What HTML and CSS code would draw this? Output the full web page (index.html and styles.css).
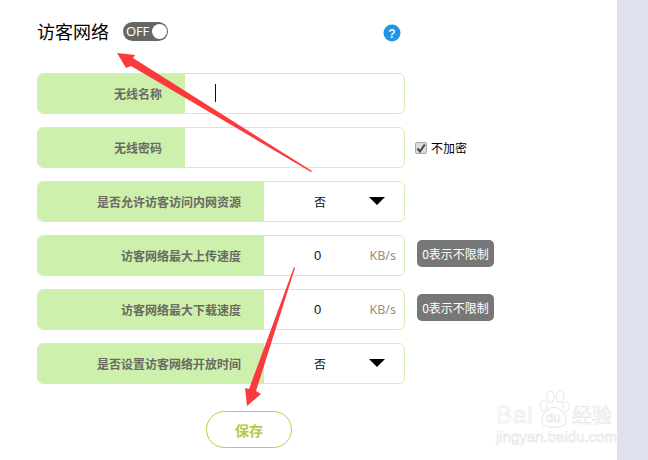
FILE: index.html
```html
<!DOCTYPE html>
<html lang="zh">
<head>
<meta charset="utf-8">
<title>访客网络</title>
<link rel="stylesheet" href="styles.css">
</head>
<body>
<div class="page">
  <main class="main">
    <header class="head">
      <h1 class="title">访客网络</h1>
      <div class="toggle"><span class="toggle-text">OFF</span><span class="knob"></span></div>
      <svg class="help" width="18" height="18" viewBox="0 0 18 18"><circle cx="9" cy="9" r="8.5" fill="#2294e6"/><text x="9" y="13.5" text-anchor="middle" class="help-mark">?</text></svg>
    </header>
    <div class="rows">
      <div class="row">
        <div class="field"><div class="label">无线名称</div><div class="value value-input"><span class="caret"></span></div></div>
      </div>
      <div class="row">
        <div class="field"><div class="label">无线密码</div><div class="value"></div></div>
        <div class="check"><span class="check-box"><svg width="10" height="10" viewBox="0 0 10 10"><path d="M1.5 5.5 4 8.5 8.8 1.5" fill="none" stroke="#444" stroke-width="2"/></svg></span><span>不加密</span></div>
      </div>
      <div class="row">
        <div class="field"><div class="label label-wide">是否允许访客访问内网资源</div><div class="value value-select"><span class="sel">否</span><span class="tri"></span></div></div>
      </div>
      <div class="row">
        <div class="field"><div class="label label-wide">访客网络最大上传速度</div><div class="value value-num"><span class="num">0</span><span class="unit">KB/s</span></div></div>
        <div class="badge">0表示不限制</div>
      </div>
      <div class="row">
        <div class="field"><div class="label label-wide">访客网络最大下载速度</div><div class="value value-num"><span class="num">0</span><span class="unit">KB/s</span></div></div>
        <div class="badge">0表示不限制</div>
      </div>
      <div class="row">
        <div class="field"><div class="label label-wide">是否设置访客网络开放时间</div><div class="value value-select"><span class="sel">否</span><span class="tri"></span></div></div>
      </div>
    </div>
    <button class="save" type="button">保存</button>
  </main>
  <aside class="side"></aside>
</div>
<svg class="arrows" width="648" height="460" viewBox="0 0 648 460">
  <polygon fill="#fb3b3b" points="117,53 135,55 133,58 312,171 311,172 131,66 126,68"/>
  <polygon fill="#fb3b3b" points="247,406 245,388 249,389 294,267 295,268 256,391 261,394"/>
</svg>
<div class="mark">
  <div class="mark-top"><span class="mark-bai">Bai</span><svg class="paw" width="34" height="38" viewBox="0 0 36 44"><g fill="none" stroke="#e8e8e8" stroke-width="1.2"><ellipse cx="6" cy="18" rx="4" ry="6"/><ellipse cx="14" cy="8" rx="4.5" ry="6.5"/><ellipse cx="25" cy="8" rx="4.5" ry="6.5"/><ellipse cx="32" cy="19" rx="3.5" ry="6"/><path d="M18 20c-6 0-14 8-14 15 0 7 6 8 14 8s14-1 14-8c0-7-8-15-14-15z"/></g></svg><span class="mark-du">du</span><span class="mark-cn">经验</span></div>
  <div class="mark-url">jingyan.baidu.com</div>
</div>
</body>
</html>
```
FILE: styles.css
```css
* { box-sizing: border-box; }
html, body { margin: 0; padding: 0; }
body {
  width: 648px;
  height: 460px;
  overflow: hidden;
  background: #fff;
  font-family: "Noto Sans CJK SC", "Liberation Sans", sans-serif;
}
.page { display: flex; height: 460px; }
.main { width: 617px; padding: 19px 0 0 37px; }
.side { width: 31px; background: #dfe1ee; }

.head { display: flex; align-items: center; height: 25px; width: 364px; }
.title { margin: 0; font-size: 18px; font-weight: 400; line-height: 25px; color: #000; white-space: nowrap; }
.toggle {
  position: relative;
  display: flex;
  align-items: center;
  width: 45px;
  height: 19px;
  margin-left: 14px;
  padding-left: 3px;
  border-radius: 10px;
  background: #666;
}
.toggle-text { font-family: "Noto Sans", "Liberation Sans", sans-serif; font-size: 13px; line-height: 19px; letter-spacing: -0.2px; color: #fff; }
.knob {
  position: absolute;
  top: 2px;
  right: 1px;
  width: 15px;
  height: 15px;
  border-radius: 50%;
  background: #fff;
}
.help { margin-left: auto; margin-top: 3px; flex: none; }
.help-mark { font-family: "Liberation Sans", sans-serif; font-size: 12px; font-weight: 700; fill: #e8f4fd; }

.rows { display: flex; flex-direction: column; gap: 13px; margin-top: 29px; }
.row { display: flex; align-items: center; height: 41px; }
.field {
  display: flex;
  width: 368px;
  height: 41px;
  flex: none;
  border: 1px solid #d2efb4;
  border-radius: 6px;
  overflow: hidden;
}
.label {
  display: flex;
  align-items: center;
  justify-content: flex-end;
  width: 148px;
  margin: -1px 0 -1px -1px;
  padding-right: 23px;
  flex: none;
  background: #cdf0ac;
  font-size: 12px;
  font-weight: 700;
  color: #6a6a62;
}
.label-wide { width: 227px; }
.value { flex: 1; display: flex; align-items: center; color: #111; font-size: 12px; }
.value-input { padding-left: 30px; }
.caret { width: 1px; height: 18px; margin-top: -2px; background: #111; }
.value-select { padding-left: 50px; }
.sel { width: 12px; }
.tri {
  width: 0;
  height: 0;
  margin-left: 43px;
  margin-top: -2px;
  border-left: 8px solid transparent;
  border-right: 8px solid transparent;
  border-top: 8px solid #000;
}
.value-num { padding-left: 50px; padding-right: 8px; justify-content: space-between; }
.num { font-family: "Liberation Sans", sans-serif; font-size: 13px; }
.unit { font-family: "Noto Sans", "Liberation Sans", sans-serif; font-size: 12.5px; color: #9c8e80; }

.check { display: flex; align-items: center; gap: 4px; margin-left: 10px; font-size: 12px; color: #000; }
.check-box {
  display: flex;
  align-items: center;
  justify-content: center;
  width: 12px;
  height: 12px;
  border: 1px solid #aaa;
  border-radius: 2px;
  background: #dcdcdc;
}
.badge {
  display: flex;
  align-items: center;
  justify-content: center;
  width: 77px;
  height: 27px;
  margin-left: 12px;
  margin-top: -5px;
  border-radius: 5px;
  background: #777;
  font-size: 12px;
  color: #fff;
  white-space: nowrap;
}

.save {
  display: block;
  width: 86px;
  height: 37px;
  margin: 27px 0 0 169px;
  padding: 0;
  border: 1px solid #b6ce3f;
  border-radius: 19px;
  background: #fff;
  font-family: inherit;
  font-size: 14px;
  font-weight: 700;
  color: #b4cb3c;
}

.arrows { position: absolute; left: 0; top: 0; pointer-events: none; }

.mark { position: absolute; left: 496px; top: 389px; width: 118px; color: transparent; -webkit-text-stroke: 0.6px #e4e4e4; }
.mark-top { position: relative; display: flex; align-items: flex-end; height: 40px; }
.mark-bai { font-family: "Liberation Sans", sans-serif; font-size: 24px; line-height: 28px; font-weight: 400; letter-spacing: 1px; }
.paw { position: absolute; left: 41px; top: 1px; }
.mark-du { position: absolute; left: 50px; top: 22px; font-family: "Liberation Sans", sans-serif; font-size: 13px; line-height: 14px; }
.mark-cn { position: absolute; left: 76px; top: 14px; font-size: 20px; line-height: 24px; white-space: nowrap; }
.mark-url { font-family: "Liberation Sans", sans-serif; font-size: 15px; line-height: 16px; white-space: nowrap; }
```
